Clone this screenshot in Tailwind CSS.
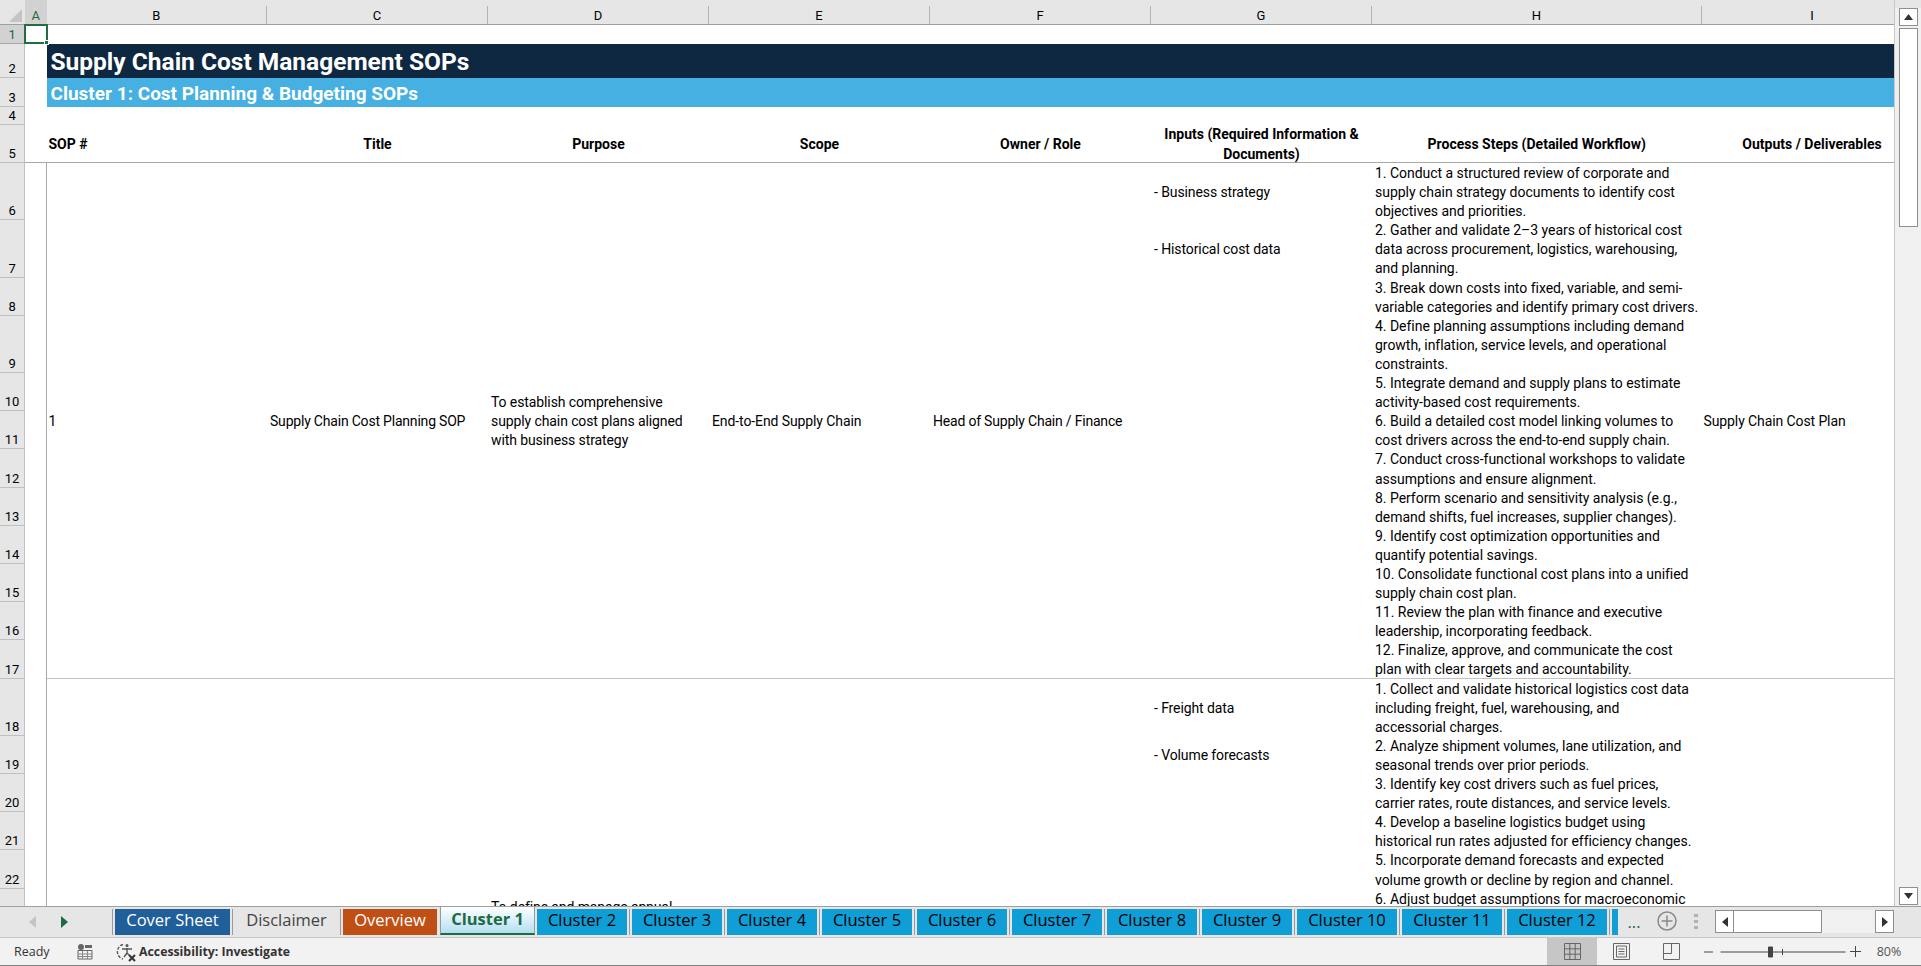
<!DOCTYPE html>
<html lang="en">
<head>
  <meta charset="UTF-8">
  <title>Supply Chain Cost Management SOPs</title>
  <script src="https://cdn.jsdelivr.net/npm/@tailwindcss/browser@4"></script>
</head>
<body class="m-0 bg-white overflow-hidden">
<div class="w-[1921px] h-[966px] flex flex-col font-['Roboto',sans-serif] text-black">

  <!-- sheet + vertical scrollbar -->
  <div class="flex h-[906px] overflow-hidden">
    <div class="w-[1894px] h-[906px] overflow-hidden grid grid-cols-[25px_21.5px_220.5px_221px_221px_221px_221px_221px_329.5px_221px] grid-rows-[25px_19px_34px_29px_18px_38px_57.3px_57.3px_38.2px_57.3px_38.2px_38.2px_38.2px_38.2px_38.2px_38.2px_38.2px_38.2px_57.3px_38.2px_38.2px_38.2px_38.2px_57.3px] text-[14px] leading-[19.1px] tracking-[-0.1px]">

      <!-- column headers -->
      <div class="col-start-1 row-start-1 bg-[#e6e6e6] border-b border-[#9f9f9f] relative">
        <svg class="absolute left-[9px] top-[9px]" width="13" height="13" viewBox="0 0 13 13"><path d="M13 0V13H0Z" fill="#c4c4c4"/></svg>
      </div>
      <div class="col-start-2 row-start-1 bg-[#d2d2d2] border-b border-[#9f9f9f] pt-[7px] flex justify-center items-center text-[#1d6b41] text-[13px]">A</div>
      <div class="col-start-3 row-start-1 bg-[#e6e6e6] border-b border-[#9f9f9f] pt-[6px] flex"><span class="flex-1 text-center border-r border-[#b4b4b4] text-[13px] leading-[20px]">B</span></div>
      <div class="col-start-4 row-start-1 bg-[#e6e6e6] border-b border-[#9f9f9f] pt-[6px] flex"><span class="flex-1 text-center border-r border-[#b4b4b4] text-[13px] leading-[20px]">C</span></div>
      <div class="col-start-5 row-start-1 bg-[#e6e6e6] border-b border-[#9f9f9f] pt-[6px] flex"><span class="flex-1 text-center border-r border-[#b4b4b4] text-[13px] leading-[20px]">D</span></div>
      <div class="col-start-6 row-start-1 bg-[#e6e6e6] border-b border-[#9f9f9f] pt-[6px] flex"><span class="flex-1 text-center border-r border-[#b4b4b4] text-[13px] leading-[20px]">E</span></div>
      <div class="col-start-7 row-start-1 bg-[#e6e6e6] border-b border-[#9f9f9f] pt-[6px] flex"><span class="flex-1 text-center border-r border-[#b4b4b4] text-[13px] leading-[20px]">F</span></div>
      <div class="col-start-8 row-start-1 bg-[#e6e6e6] border-b border-[#9f9f9f] pt-[6px] flex"><span class="flex-1 text-center border-r border-[#b4b4b4] text-[13px] leading-[20px]">G</span></div>
      <div class="col-start-9 row-start-1 bg-[#e6e6e6] border-b border-[#9f9f9f] pt-[6px] flex"><span class="flex-1 text-center border-r border-[#b4b4b4] text-[13px] leading-[20px]">H</span></div>
      <div class="col-start-10 row-start-1 bg-[#e6e6e6] border-b border-[#9f9f9f] pt-[6px] flex"><span class="flex-1 text-center text-[13px] leading-[20px]">I</span></div>

      <!-- row headers -->
      <div class="col-start-1 row-start-2 bg-[#d2d2d2] border-r border-b border-[#a8a8a8] flex items-end justify-center text-[#1d6b41] text-[13px] leading-[16px]">1</div>
      <div class="col-start-1 row-start-3 bg-[#e6e6e6] border-r border-b border-[#c0c0c0] flex items-end justify-center text-[13px] leading-[16px]">2</div>
      <div class="col-start-1 row-start-4 bg-[#e6e6e6] border-r border-b border-[#c0c0c0] flex items-end justify-center text-[13px] leading-[16px]">3</div>
      <div class="col-start-1 row-start-5 bg-[#e6e6e6] border-r border-b border-[#c0c0c0] flex items-end justify-center text-[13px] leading-[16px]">4</div>
      <div class="col-start-1 row-start-6 bg-[#e6e6e6] border-r border-b border-[#c0c0c0] flex items-end justify-center text-[13px] leading-[16px]">5</div>
      <div class="col-start-1 row-start-7 bg-[#e6e6e6] border-r border-b border-[#c0c0c0] flex items-end justify-center text-[13px] leading-[16px]">6</div>
      <div class="col-start-1 row-start-8 bg-[#e6e6e6] border-r border-b border-[#c0c0c0] flex items-end justify-center text-[13px] leading-[16px]">7</div>
      <div class="col-start-1 row-start-9 bg-[#e6e6e6] border-r border-b border-[#c0c0c0] flex items-end justify-center text-[13px] leading-[16px]">8</div>
      <div class="col-start-1 row-start-10 bg-[#e6e6e6] border-r border-b border-[#c0c0c0] flex items-end justify-center text-[13px] leading-[16px]">9</div>
      <div class="col-start-1 row-start-11 bg-[#e6e6e6] border-r border-b border-[#c0c0c0] flex items-end justify-center text-[13px] leading-[16px]">10</div>
      <div class="col-start-1 row-start-12 bg-[#e6e6e6] border-r border-b border-[#c0c0c0] flex items-end justify-center text-[13px] leading-[16px]">11</div>
      <div class="col-start-1 row-start-13 bg-[#e6e6e6] border-r border-b border-[#c0c0c0] flex items-end justify-center text-[13px] leading-[16px]">12</div>
      <div class="col-start-1 row-start-14 bg-[#e6e6e6] border-r border-b border-[#c0c0c0] flex items-end justify-center text-[13px] leading-[16px]">13</div>
      <div class="col-start-1 row-start-15 bg-[#e6e6e6] border-r border-b border-[#c0c0c0] flex items-end justify-center text-[13px] leading-[16px]">14</div>
      <div class="col-start-1 row-start-16 bg-[#e6e6e6] border-r border-b border-[#c0c0c0] flex items-end justify-center text-[13px] leading-[16px]">15</div>
      <div class="col-start-1 row-start-17 bg-[#e6e6e6] border-r border-b border-[#c0c0c0] flex items-end justify-center text-[13px] leading-[16px]">16</div>
      <div class="col-start-1 row-start-18 bg-[#e6e6e6] border-r border-b border-[#c0c0c0] flex items-end justify-center text-[13px] leading-[16px]">17</div>
      <div class="col-start-1 row-start-19 bg-[#e6e6e6] border-r border-b border-[#c0c0c0] flex items-end justify-center text-[13px] leading-[16px]">18</div>
      <div class="col-start-1 row-start-20 bg-[#e6e6e6] border-r border-b border-[#c0c0c0] flex items-end justify-center text-[13px] leading-[16px]">19</div>
      <div class="col-start-1 row-start-21 bg-[#e6e6e6] border-r border-b border-[#c0c0c0] flex items-end justify-center text-[13px] leading-[16px]">20</div>
      <div class="col-start-1 row-start-22 bg-[#e6e6e6] border-r border-b border-[#c0c0c0] flex items-end justify-center text-[13px] leading-[16px]">21</div>
      <div class="col-start-1 row-start-23 bg-[#e6e6e6] border-r border-b border-[#c0c0c0] flex items-end justify-center text-[13px] leading-[16px]">22</div>
      <div class="col-start-1 row-start-24 bg-[#e6e6e6] border-r border-[#c0c0c0]"></div>

      <!-- selected cell A1 -->
      <div class="col-start-2 row-start-2 relative z-10 border-2 border-[#1f6f43] -mt-px -ml-px -mr-px">
        <span class="absolute -right-[3px] -bottom-[3px] w-[5px] h-[5px] bg-[#1f6f43] border border-white"></span>
      </div>

      <!-- title bands -->
      <div class="col-start-3 col-span-8 row-start-3 bg-[#0e2841] text-white font-bold text-[24.5px] tracking-normal leading-[34px] px-[4px] pt-[2px] flex items-center">Supply Chain Cost Management SOPs</div>
      <div class="col-start-3 col-span-8 row-start-4 bg-[#45b0e1] text-white font-bold text-[19px] tracking-normal leading-[29px] px-[4px] pt-[2px] flex items-center">Cluster 1: Cost Planning &amp; Budgeting SOPs</div>

      <!-- header row -->
      <div class="col-start-2 row-start-6 border-b border-[#a8a8a8]"></div>
      <div class="col-start-3 row-start-6 border-b border-[#a8a8a8] font-bold tracking-normal flex items-center pt-[2px] px-[2px]">SOP #</div>
      <div class="col-start-4 row-start-6 border-b border-[#a8a8a8] font-bold tracking-normal flex items-center justify-center text-center pt-[2px] px-[3px]">Title</div>
      <div class="col-start-5 row-start-6 border-b border-[#a8a8a8] font-bold tracking-normal flex items-center justify-center text-center pt-[2px] px-[3px]">Purpose</div>
      <div class="col-start-6 row-start-6 border-b border-[#a8a8a8] font-bold tracking-normal flex items-center justify-center text-center pt-[2px] px-[3px]">Scope</div>
      <div class="col-start-7 row-start-6 border-b border-[#a8a8a8] font-bold tracking-normal flex items-center justify-center text-center pt-[2px] px-[3px]">Owner / Role</div>
      <div class="col-start-8 row-start-6 border-b border-[#a8a8a8] font-bold tracking-normal flex items-center justify-center text-center pt-[2px] px-[3px]">Inputs (Required Information &amp; Documents)</div>
      <div class="col-start-9 row-start-6 border-b border-[#a8a8a8] font-bold tracking-normal flex items-center justify-center text-center pt-[2px] px-[3px]">Process Steps (Detailed Workflow)</div>
      <div class="col-start-10 row-start-6 border-b border-[#a8a8a8] font-bold tracking-normal flex items-center justify-center text-center pt-[2px] px-[3px]">Outputs / Deliverables</div>

      <!-- column A rule below the header -->
      <div class="col-start-2 row-start-7 row-span-18 border-r border-[#a8a8a8]"></div>

      <!-- SOP 1 -->
      <div class="col-start-3 row-start-7 row-span-12 border-b border-[#c4c4c4] flex items-center pt-[2px] px-[2px]">1</div>
      <div class="col-start-4 row-start-7 row-span-12 border-b border-[#c4c4c4] flex items-center pt-[2px] px-[3px] tracking-[-0.2px]">Supply Chain Cost Planning SOP</div>
      <div class="col-start-5 row-start-7 row-span-12 border-b border-[#c4c4c4] flex items-center pt-[2px] px-[3px]">To establish comprehensive supply chain cost plans aligned with business strategy</div>
      <div class="col-start-6 row-start-7 row-span-12 border-b border-[#c4c4c4] flex items-center pt-[2px] px-[3px]">End-to-End Supply Chain</div>
      <div class="col-start-7 row-start-7 row-span-12 border-b border-[#c4c4c4] flex items-center pt-[2px] px-[3px] tracking-[-0.2px]">Head of Supply Chain / Finance</div>
      <div class="col-start-8 row-start-7 row-span-12 border-b border-[#c4c4c4]"></div>
      <div class="col-start-8 row-start-7 flex items-center pt-[2px] px-[3px]">- Business strategy</div>
      <div class="col-start-8 row-start-8 flex items-center pt-[2px] px-[3px]">- Historical cost data</div>
      <div class="col-start-9 row-start-7 row-span-12 border-b border-[#c4c4c4] px-[3px] pt-[1px] whitespace-nowrap tracking-[-0.03px] h-[516px] overflow-hidden">
        <p>1. Conduct a structured review of corporate and<br>supply chain strategy documents to identify cost<br>objectives and priorities.</p>
        <p>2. Gather and validate 2–3 years of historical cost<br>data across procurement, logistics, warehousing,<br>and planning.</p>
        <p>3. Break down costs into fixed, variable, and semi-<br>variable categories and identify primary cost drivers.</p>
        <p>4. Define planning assumptions including demand<br>growth, inflation, service levels, and operational<br>constraints.</p>
        <p>5. Integrate demand and supply plans to estimate<br>activity-based cost requirements.</p>
        <p>6. Build a detailed cost model linking volumes to<br>cost drivers across the end-to-end supply chain.</p>
        <p>7. Conduct cross-functional workshops to validate<br>assumptions and ensure alignment.</p>
        <p>8. Perform scenario and sensitivity analysis (e.g.,<br>demand shifts, fuel increases, supplier changes).</p>
        <p>9. Identify cost optimization opportunities and<br>quantify potential savings.</p>
        <p>10. Consolidate functional cost plans into a unified<br>supply chain cost plan.</p>
        <p>11. Review the plan with finance and executive<br>leadership, incorporating feedback.</p>
        <p>12. Finalize, approve, and communicate the cost<br>plan with clear targets and accountability.</p>
      </div>
      <div class="col-start-10 row-start-7 row-span-12 border-b border-[#c4c4c4] flex items-center pt-[2px] px-[2px]">Supply Chain Cost Plan</div>

      <!-- SOP 2, cut off by the tab bar -->
      <div class="col-start-5 row-start-19 row-span-6 px-[3px] pt-[219px]">To define and manage annual</div>
      <div class="col-start-8 row-start-19 flex items-center pt-[2px] px-[3px]">- Freight data</div>
      <div class="col-start-8 row-start-20 flex items-center pt-[2px] px-[3px]">- Volume forecasts</div>
      <div class="col-start-9 row-start-19 row-span-6 px-[3px] pt-[1px] whitespace-nowrap tracking-[-0.03px]">
        <p>1. Collect and validate historical logistics cost data<br>including freight, fuel, warehousing, and<br>accessorial charges.</p>
        <p>2. Analyze shipment volumes, lane utilization, and<br>seasonal trends over prior periods.</p>
        <p>3. Identify key cost drivers such as fuel prices,<br>carrier rates, route distances, and service levels.</p>
        <p>4. Develop a baseline logistics budget using<br>historical run rates adjusted for efficiency changes.</p>
        <p>5. Incorporate demand forecasts and expected<br>volume growth or decline by region and channel.</p>
        <p>6. Adjust budget assumptions for macroeconomic</p>
      </div>
    </div>

    <!-- vertical scrollbar -->
    <div class="w-[27px] h-[906px] bg-[#f0f0f0] border-l border-[#c8c8c8] flex flex-col items-center relative">
      <div class="h-[8px] w-full bg-[#e6e6e6] shrink-0"></div>
      <div class="w-[19px] h-[18px] bg-white border border-[#8f8f8f] flex items-center justify-center shrink-0">
        <svg width="9" height="6" viewBox="0 0 9 6"><path d="M4.5 0 9 6H0Z" fill="#333"/></svg>
      </div>
      <div class="w-[19px] h-[199px] mt-[2px] bg-white border border-[#8f8f8f] shrink-0"></div>
      <div class="mt-auto mb-[1px] w-[19px] h-[18px] bg-white border border-[#8f8f8f] flex items-center justify-center shrink-0">
        <svg width="9" height="6" viewBox="0 0 9 6"><path d="M0 0H9L4.5 6Z" fill="#333"/></svg>
      </div>
    </div>
  </div>

  <!-- sheet tabs -->
  <div class="h-[32px] bg-[#e6e6e6] border-t border-b border-t-[#9f9f9f] border-b-[#c8c8c8] flex items-start pt-[2px] font-['Open_Sans',sans-serif] text-[16.5px] relative">
    <div class="w-[112px] h-[26px] shrink-0 flex items-center">
      <svg class="ml-[29px]" width="7" height="12" viewBox="0 0 7 12"><path d="M7 0V12L0 6Z" fill="#c4c4c4"/></svg>
      <svg class="ml-[25px]" width="7" height="12" viewBox="0 0 7 12"><path d="M0 0V12L7 6Z" fill="#1d6b41"/></svg>
    </div>
    <div class="w-[3px] h-[26px] border-l border-[#9a9a9a]"></div>
    <div class="w-[115px] h-[26px] pb-[4px] bg-[#215f9a] text-white flex items-center justify-center">Cover Sheet</div>
    <div class="w-[5px] h-[26px] flex justify-center"><i class="w-px h-full bg-[#9a9a9a]"></i></div>
    <div class="w-[103px] h-[26px] pb-[4px] text-[#444] flex items-center justify-center">Disclaimer</div>
    <div class="w-[5px] h-[26px] flex justify-center"><i class="w-px h-full bg-[#9a9a9a]"></i></div>
    <div class="w-[94px] h-[26px] pb-[4px] bg-[#c04f15] text-white flex items-center justify-center">Overview</div>
    <div class="w-[3px]"></div>
    <div class="w-[95px] h-[28px] -mt-[2px] pb-[1px] bg-linear-to-b from-white to-[#b2dff2] text-[#1d6b41] font-bold border-x border-[#9a9a9a] border-b-2 border-b-[#1d6b41] flex items-center justify-center">Cluster 1</div>
    <div class="w-[2px]"></div>
    <div class="w-[90px] h-[26px] pb-[4px] bg-[#0f9ed5] flex items-center justify-center">Cluster 2</div>
    <div class="w-[5px] h-[26px] flex justify-center"><i class="w-px h-full bg-[#9a9a9a]"></i></div>
    <div class="w-[90px] h-[26px] pb-[4px] bg-[#0f9ed5] flex items-center justify-center">Cluster 3</div>
    <div class="w-[5px] h-[26px] flex justify-center"><i class="w-px h-full bg-[#9a9a9a]"></i></div>
    <div class="w-[90px] h-[26px] pb-[4px] bg-[#0f9ed5] flex items-center justify-center">Cluster 4</div>
    <div class="w-[5px] h-[26px] flex justify-center"><i class="w-px h-full bg-[#9a9a9a]"></i></div>
    <div class="w-[90px] h-[26px] pb-[4px] bg-[#0f9ed5] flex items-center justify-center">Cluster 5</div>
    <div class="w-[5px] h-[26px] flex justify-center"><i class="w-px h-full bg-[#9a9a9a]"></i></div>
    <div class="w-[90px] h-[26px] pb-[4px] bg-[#0f9ed5] flex items-center justify-center">Cluster 6</div>
    <div class="w-[5px] h-[26px] flex justify-center"><i class="w-px h-full bg-[#9a9a9a]"></i></div>
    <div class="w-[90px] h-[26px] pb-[4px] bg-[#0f9ed5] flex items-center justify-center">Cluster 7</div>
    <div class="w-[5px] h-[26px] flex justify-center"><i class="w-px h-full bg-[#9a9a9a]"></i></div>
    <div class="w-[90px] h-[26px] pb-[4px] bg-[#0f9ed5] flex items-center justify-center">Cluster 8</div>
    <div class="w-[5px] h-[26px] flex justify-center"><i class="w-px h-full bg-[#9a9a9a]"></i></div>
    <div class="w-[90px] h-[26px] pb-[4px] bg-[#0f9ed5] flex items-center justify-center">Cluster 9</div>
    <div class="w-[5px] h-[26px] flex justify-center"><i class="w-px h-full bg-[#9a9a9a]"></i></div>
    <div class="w-[100px] h-[26px] pb-[4px] bg-[#0f9ed5] flex items-center justify-center">Cluster 10</div>
    <div class="w-[5px] h-[26px] flex justify-center"><i class="w-px h-full bg-[#9a9a9a]"></i></div>
    <div class="w-[100px] h-[26px] pb-[4px] bg-[#0f9ed5] flex items-center justify-center">Cluster 11</div>
    <div class="w-[5px] h-[26px] flex justify-center"><i class="w-px h-full bg-[#9a9a9a]"></i></div>
    <div class="w-[100px] h-[26px] pb-[4px] bg-[#0f9ed5] flex items-center justify-center">Cluster 12</div>
    <div class="w-[5px] h-[26px] flex justify-center"><i class="w-px h-full bg-[#9a9a9a]"></i></div>
    <div class="w-[6px] h-[26px] bg-[#0f9ed5]"></div>
    <div class="w-[30px] h-[26px] text-[#1d6b41] text-center leading-[26px] ml-[1px]">...</div>
    <svg class="ml-[7.5px] mt-[2px]" width="20" height="20" viewBox="0 0 20 20" fill="none" stroke="#8a8a8a"><circle cx="10" cy="10" r="9" stroke-width="1.5"/><path d="M10 4.500v11M4.500 10h11" stroke-width="1.5"/></svg>
    <div class="ml-[17.5px] mt-[5px] w-[4px] flex flex-col gap-[3px]"><i class="h-[3px] bg-[#b0b0b0]"></i><i class="h-[3px] bg-[#b0b0b0]"></i><i class="h-[3px] bg-[#b0b0b0]"></i></div>
    <div class="ml-[17px] mt-[1px] w-[179px] h-[23px] bg-[#f0f0f0] flex">
      <div class="w-[19px] h-full bg-white border border-[#8f8f8f] flex items-center justify-center"><svg width="6" height="10" viewBox="0 0 6 10"><path d="M6 0V10L0 5Z" fill="#333"/></svg></div>
      <div class="w-[88px] h-full bg-white border border-[#8f8f8f] border-l-0"></div>
      <div class="ml-auto w-[19px] h-full bg-white border border-[#8f8f8f] flex items-center justify-center"><svg width="6" height="10" viewBox="0 0 6 10"><path d="M0 0V10L6 5Z" fill="#333"/></svg></div>
    </div>
  </div>

  <!-- status bar -->
  <div class="h-[28px] bg-[#f2f2f2] border-b border-[#7f7f7f] flex items-center font-['Open_Sans',sans-serif] text-[12.5px] text-[#333] relative">
    <span class="ml-[14px] w-[63px] pt-[1px]">Ready</span>
    <svg width="16" height="17" viewBox="0 0 16 17" fill="none"><circle cx="4" cy="4" r="3" fill="#666"/><path d="M8 2h7v3H8Z" fill="#666"/><path d="M1 7.500h14V16H1Z" stroke="#666"/><path d="M5.500 8v8M10.500 8v8M1 11h14M1 13.500h14" stroke="#888"/></svg>
    <svg class="ml-[23px]" width="21" height="20" viewBox="0 0 21 20" fill="none" stroke="#555" stroke-width="1.4"><path d="M7 2.500a7.500 7.500 0 0 0 0 14.500" stroke-dasharray="3 1.500"/><circle cx="11" cy="3.500" r="1.500" fill="#555" stroke="none"/><path d="M6 7h10M11 6v6M11 11l-3 4M11 11l2 2"/><path d="M13 13l6 6M19 13l-6 6" stroke="#333" stroke-width="2"/></svg>
    <span class="ml-[2px] pt-[1px] font-bold text-[12.3px]">Accessibility: Investigate</span>
    <div class="ml-auto flex items-center h-full mr-[3.5px]">
      <div class="w-[50px] h-full bg-[#c6c6c6] flex items-center justify-center">
        <svg width="17" height="17" viewBox="0 0 17 17" fill="none" stroke="#666"><path d="M.5.5h16v16H.5ZM5.800.5v16M11.200.5v16M.5 5.800h16M.5 11.200h16"/></svg>
      </div>
      <div class="w-[48px] flex justify-center">
        <svg width="17" height="17" viewBox="0 0 17 17" fill="none" stroke="#666"><path d="M.5.5h16v16H.5Z"/><path d="M3.500 3h10v11h-10ZM5.500 6h6M5.500 8.500h6M5.500 11h6"/></svg>
      </div>
      <div class="w-[52px] flex justify-center">
        <svg width="17" height="17" viewBox="0 0 17 17" fill="none" stroke="#666"><path d="M.5.5h16v16H.5ZM.5 10.500h8V.5"/></svg>
      </div>
      <svg class="ml-[6.5px]" width="142" height="20" viewBox="0 0 142 20" fill="none" stroke="#444"><path d="M0 10h9M16.500 10h125"/><path d="M64.500 5h4v10h-4z" fill="#444"/><path d="M78.500 7v6"/></svg>
      <svg class="ml-[4px]" width="11" height="11" viewBox="0 0 11 11" stroke="#444"><path d="M5.500 0v11M0 5.500h11"/></svg>
      <span class="w-[57px] pt-[1px] text-center text-[#555]">80%</span>
    </div>
  </div>
</div>
</body>
</html>
